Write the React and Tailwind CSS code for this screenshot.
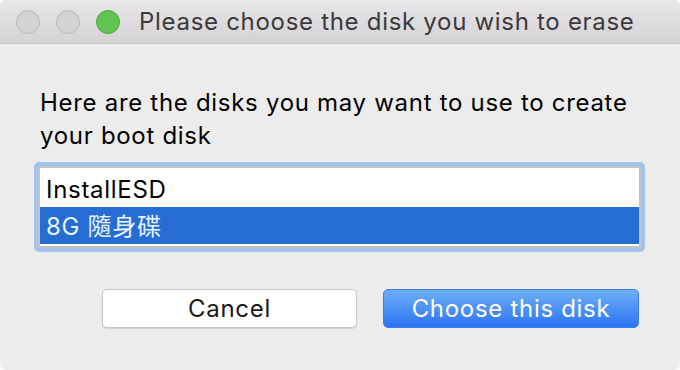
import React from 'react';

const font = { fontFamily: 'Inter, "Liberation Sans", "Noto Sans CJK TC", sans-serif' };

const TrafficLight = ({ color }) => (
  <div className={`h-[24px] w-[24px] rounded-full border ${color}`} />
);

export default function App() {
  return (
    <div className="h-[370px] w-[680px] bg-white tracking-[0.7px]" style={font}>
      <div className="flex h-full w-full flex-col overflow-hidden rounded-[6px] bg-[#ececec]">
        {/* Title bar */}
        <div className="flex h-[44px] shrink-0 items-center border-b border-[#c4c2c4] bg-gradient-to-b from-[#e9e7e9] to-[#d4d2d4] pl-[16px]">
          <div className="flex gap-[16px]">
            <TrafficLight color="bg-[#d3d1d3] border-[#b9b7b9]" />
            <TrafficLight color="bg-[#d3d1d3] border-[#b9b7b9]" />
            <TrafficLight color="bg-[#5fc550] border-[#4caa3d]" />
          </div>
          <div className="ml-[19px] text-[24px] leading-none text-[#3b393b]">
            Please choose the disk you wish to erase
          </div>
        </div>

        {/* Body */}
        <div className="flex flex-col px-[34px] pt-[42px]">
          <p className="pl-[6px] text-[24px] leading-[33px] text-black">
            Here are the disks you may want to use to create your boot disk
          </p>

          <div className="mt-[10px] w-[611px] rounded-[5px] border-4 border-[#a2c3ee]">
            <div className="border-2 border-[#c3c3c3] bg-white pb-[2px]">
              <div className="flex h-[39px] items-center pl-[6px] pt-[5px] text-[24px] text-black">InstallESD</div>
              <div className="flex h-[37px] items-center bg-[#256dd3] pl-[6px] pt-[3px] text-[24px] text-[#eaf1ff]">
                8G 隨身碟
              </div>
            </div>
          </div>

          <div className="mt-[37px] flex gap-[26px] pl-[68px]">
            <button className="h-[39px] w-[255px] rounded-[5px] border border-[#c6c6c6] bg-white text-[24px] text-[#1a1a1a] shadow-[0_1px_1px_rgba(0,0,0,0.12)]">
              Cancel
            </button>
            <button className="h-[39px] w-[256px] rounded-[5px] border border-[#3a7cef] bg-gradient-to-b from-[#6eaef8] to-[#2c73f1] text-[24px] text-white">
              Choose this disk
            </button>
          </div>
        </div>
      </div>
    </div>
  );
}
